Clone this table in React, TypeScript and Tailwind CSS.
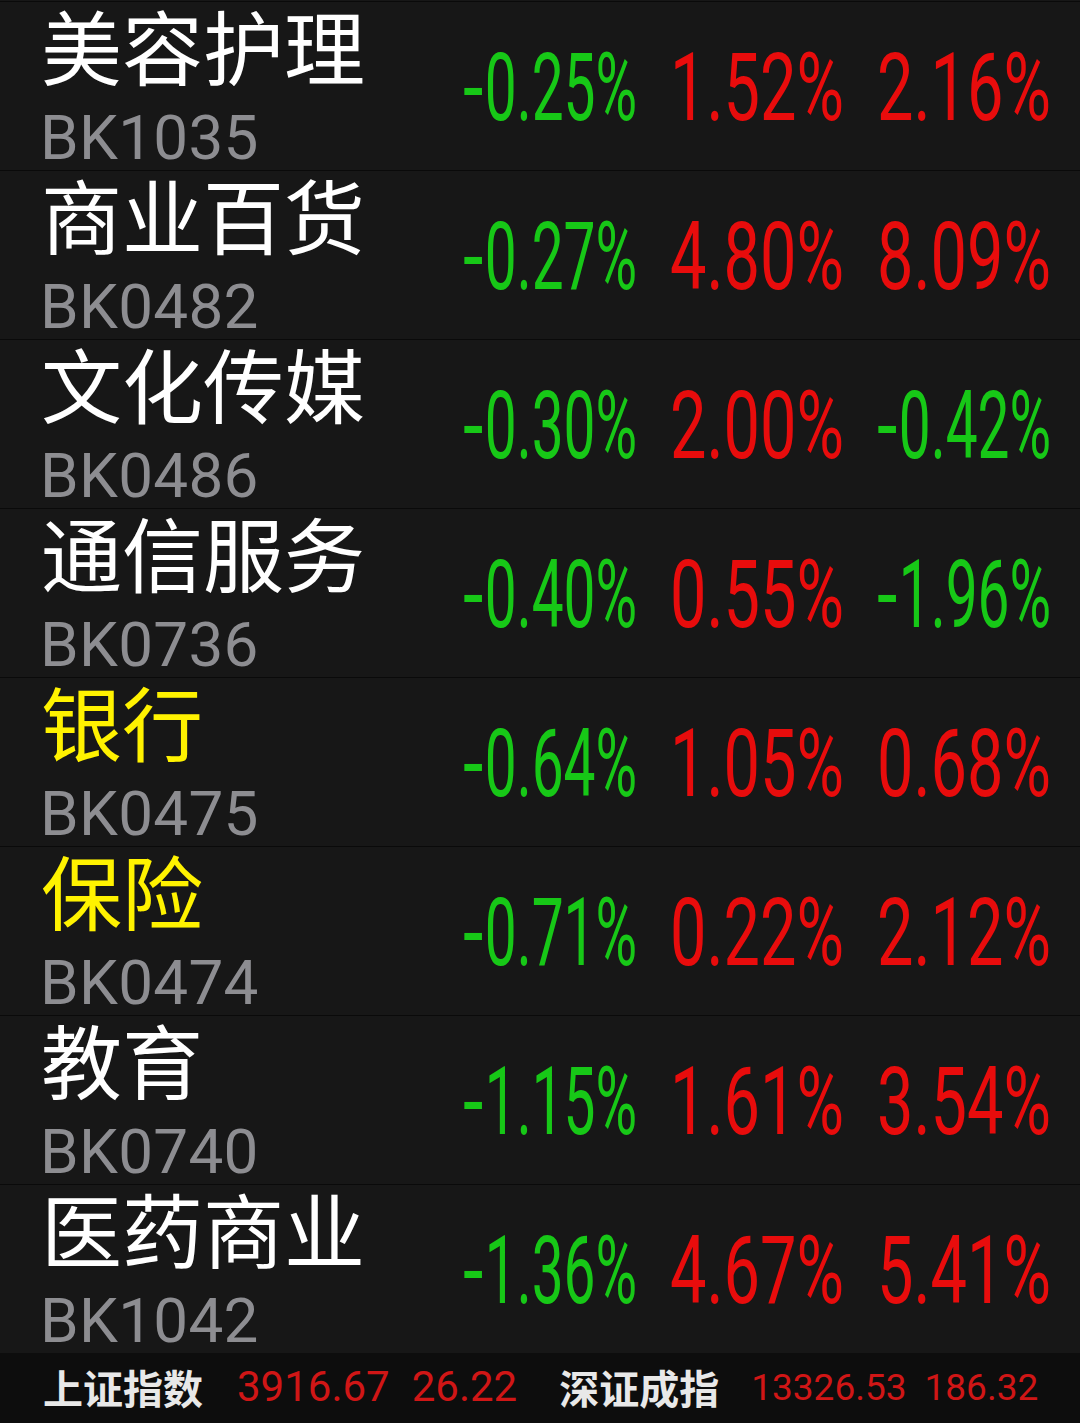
import React, { useLayoutEffect, useRef, useState } from "react";

type Row = { name: string; code: string; vals: string[]; yellow?: boolean };

const rows: Row[] = [
  { name: "美容护理", code: "BK1035", vals: ["-0.25%", "1.52%", "2.16%"] },
  { name: "商业百货", code: "BK0482", vals: ["-0.27%", "4.80%", "8.09%"] },
  { name: "文化传媒", code: "BK0486", vals: ["-0.30%", "2.00%", "-0.42%"] },
  { name: "通信服务", code: "BK0736", vals: ["-0.40%", "0.55%", "-1.96%"] },
  { name: "银行", code: "BK0475", vals: ["-0.64%", "1.05%", "0.68%"], yellow: true },
  { name: "保险", code: "BK0474", vals: ["-0.71%", "0.22%", "2.12%"], yellow: true },
  { name: "教育", code: "BK0740", vals: ["-1.15%", "1.61%", "3.54%"] },
  { name: "医药商业", code: "BK1042", vals: ["-1.36%", "4.67%", "5.41%"] },
];

function FitText({ text, width }: { text: string; width: number }) {
  const ref = useRef<HTMLSpanElement>(null);
  const [scale, setScale] = useState(1);
  useLayoutEffect(() => {
    if (ref.current) {
      const w = ref.current.offsetWidth;
      if (w > 0) setScale(width / w);
    }
  }, [text, width]);
  const neg = text.startsWith("-");
  return (
    <div className="w-[174px] overflow-visible">
      <span
        ref={ref}
        className={`inline-block whitespace-nowrap origin-left text-[94px] leading-none font-['Roboto',sans-serif] ${
          neg ? "text-[#17c817]" : "text-[#e80c0c]"
        }`}
        style={{ transform: `scaleX(${scale})` }}
      >
        {neg ? (
          <>
            <span className="inline-block scale-x-[1.3] origin-left mr-[10px]">-</span>
            {text.slice(1)}
          </>
        ) : (
          text
        )}
      </span>
    </div>
  );
}

export default function App() {
  return (
    <div className="w-[1080px] h-[1423px] bg-[#171717] flex flex-col pt-px overflow-hidden">
      {rows.map((r) => (
        <div
          key={r.code}
          className="h-[169px] border-t border-[#0a0a0a] flex items-stretch shrink-0"
        >
          <div className="w-[463px] pl-[41px] pr-[10px] flex flex-col">
            <div
              className={`whitespace-nowrap text-[81px] leading-[84px] font-['Noto_Sans_CJK_SC',sans-serif] ${
                r.yellow ? "text-[#fff200]" : "text-white"
              }`}
            >
              {r.name}
            </div>
            <div className="mt-[22px] -ml-[1px] text-[62px] leading-[60px] font-['Roboto',sans-serif] text-[#8d8d91] tracking-[0.3px]">
              {r.code}
            </div>
          </div>
          <div className="flex items-center gap-[33px] pt-[4px]">
            {r.vals.map((v, i) => (
              <FitText key={i} text={v} width={174} />
            ))}
          </div>
        </div>
      ))}
      <div className="flex-1 bg-[#0d0d0d] flex items-center pl-[43px] pb-[2px]">
        <span className="text-[40px] leading-none font-bold text-[#e8e8e8] font-['Noto_Sans_CJK_SC',sans-serif]">
          上证指数
        </span>
        <span className="ml-[34px] text-[42px] leading-none text-[#d01616] font-['Roboto',sans-serif]">
          3916.67
        </span>
        <span className="ml-[22px] text-[42px] leading-none text-[#d01616] font-['Roboto',sans-serif]">
          26.22
        </span>
        <span className="ml-[42px] text-[40px] leading-none font-bold text-[#e8e8e8] font-['Noto_Sans_CJK_SC',sans-serif]">
          深证成指
        </span>
        <span className="ml-[32px] text-[37px] leading-none text-[#d01616] font-['Roboto',sans-serif]">
          13326.53
        </span>
        <span className="ml-[18px] text-[37px] leading-none text-[#d01616] font-['Roboto',sans-serif]">
          186.32
        </span>
      </div>
    </div>
  );
}
